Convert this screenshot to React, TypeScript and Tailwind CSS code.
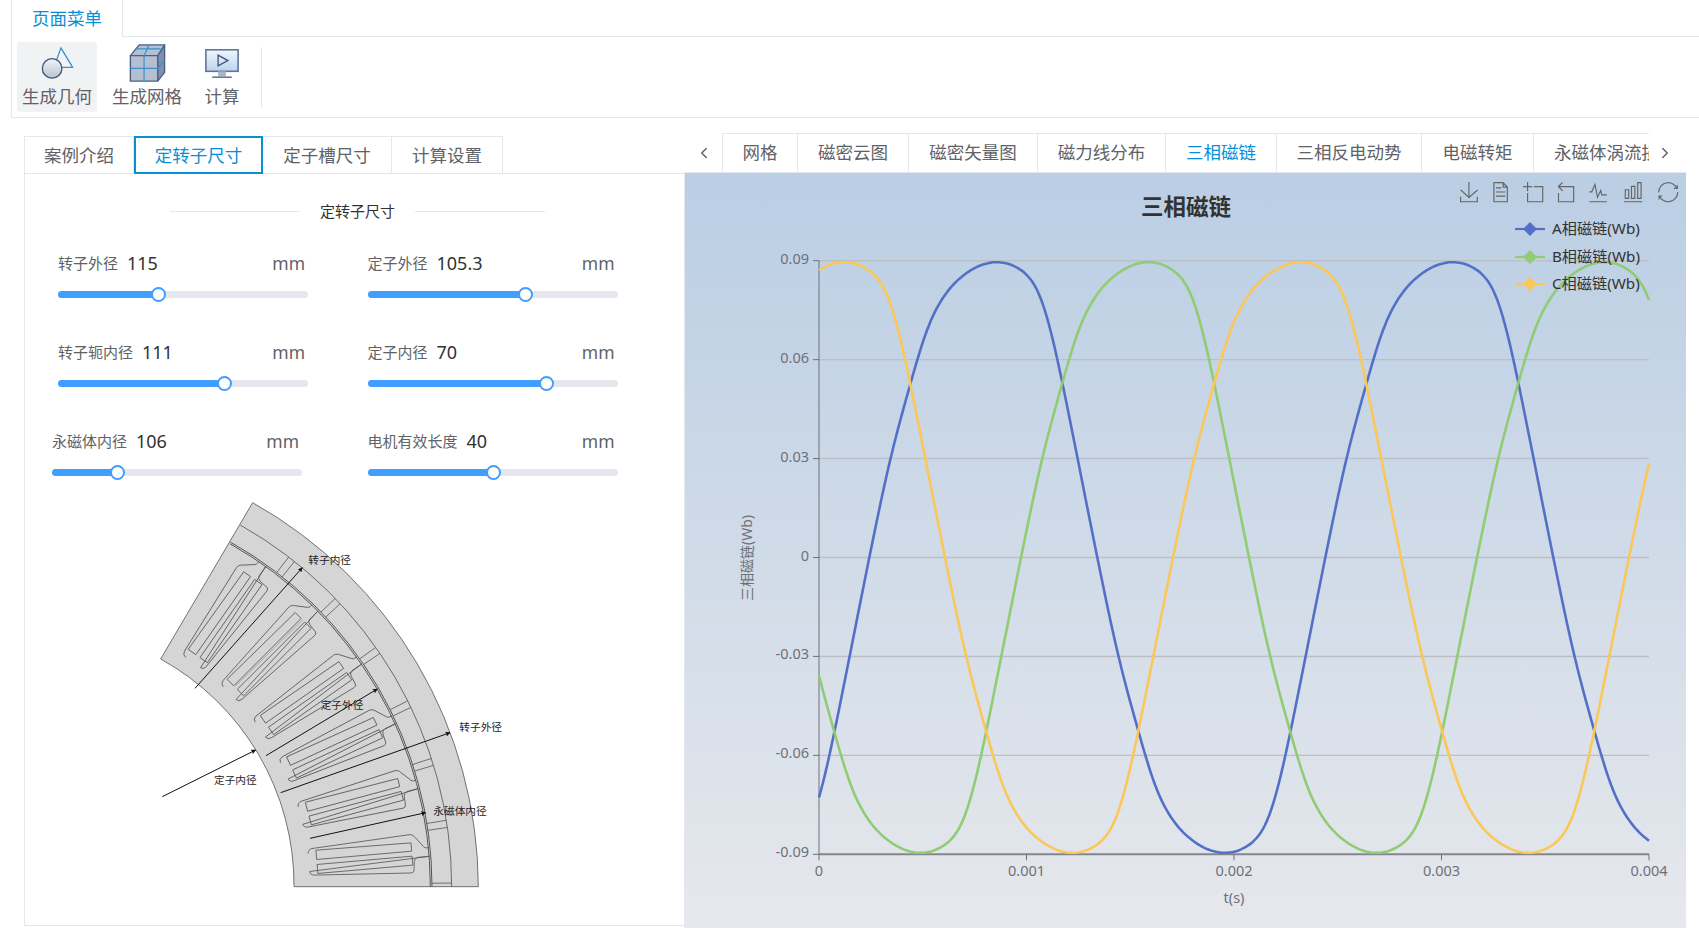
import React from 'react';
import { ChevronLeft, ChevronRight } from 'lucide-react';

const FONT = "'Noto Sans','Noto Sans CJK SC',sans-serif";

// ---------- chart data ----------
const X0 = 819;
const X1 = 1649;
const Y_TOP = 260.7;
const Y_BOTTOM = 854.3;
const PERIOD_PX = 456;

const yOf = (v: number) => (Y_TOP + Y_BOTTOM) / 2 - (v / 0.09) * ((Y_BOTTOM - Y_TOP) / 2);

// half a period of the flux wave, read off the plot: [px after the peak, Wb]
const HALF: [number, number][] = [
  [0, 0.0897],
  [12, 0.089],
  [22, 0.0877],
  [38, 0.0828],
  [48, 0.0752],
  [60.3, 0.06],
  [80.3, 0.03],
  [100, 0],
  [121, -0.03],
  [148, -0.06],
  [159, -0.0705],
  [176, -0.08],
  [192, -0.0851],
  [209, -0.0884],
  [228, -0.0897],
];

const slopeAt = (i: number) => {
  if (i === 0 || i === HALF.length - 1) return 0;
  return (HALF[i + 1][1] - HALF[i - 1][1]) / (HALF[i + 1][0] - HALF[i - 1][0]);
};

const halfWave = (d: number) => {
  let i = 0;
  while (i < HALF.length - 2 && d > HALF[i + 1][0]) i++;
  const [x0, y0] = HALF[i];
  const [x1, y1] = HALF[i + 1];
  const h = x1 - x0;
  const s = (d - x0) / h;
  const s2 = s * s;
  const s3 = s2 * s;
  return (
    (2 * s3 - 3 * s2 + 1) * y0 +
    (s3 - 2 * s2 + s) * h * slopeAt(i) +
    (-2 * s3 + 3 * s2) * y1 +
    (s3 - s2) * h * slopeAt(i + 1)
  );
};

const wave = (x: number, peak: number) => {
  const d = (((x - peak) % PERIOD_PX) + PERIOD_PX) % PERIOD_PX;
  return d < PERIOD_PX / 2 ? halfWave(d) : -halfWave(d - PERIOD_PX / 2);
};

// small moving average, hand-read points leave little kinks otherwise
const smooth = (x: number, peak: number) =>
  [-8, -4, 0, 4, 8].reduce((sum, k) => sum + wave(x + k, peak), 0) / 5;

const curve = (peak: number) => {
  const pts: string[] = [];
  for (let x = X0; x <= X1; x += 2) {
    pts.push(`${x},${yOf(smooth(x, peak)).toFixed(1)}`);
  }
  return pts.join(' ');
};

const series = [
  { name: 'A相磁链(Wb)', color: '#5470c6', peak: 997.3, y: 229 },
  { name: 'B相磁链(Wb)', color: '#91cc75', peak: 1149, y: 257 },
  { name: 'C相磁链(Wb)', color: '#fac858', peak: 845, y: 284 },
];

const yTicks = ['0.09', '0.06', '0.03', '0', '-0.03', '-0.06', '-0.09'];
const xTicks = ['0', '0.001', '0.002', '0.003', '0.004'];

const tools = [
  { x: 1469, d: 'M4.7,22.9L29.3,45.5L54.7,23.4M4.6,43.6L4.6,58L53.8,58L53.8,43.6M29.2,45.1L29.2,0' },
  { x: 1500, d: 'M17.5,17.3H33M45.4,29.5h-28M11.5,2v56H51V14.8L38.4,2H11.5zM38.4,2.2v12.7H51M45.4,41.7h-28' },
  { x: 1533, d: 'M0,13.5h26.9M13.5,26.9V0M32.1,13.5H58V58H13.5V32.1' },
  { x: 1565, d: 'M22,1.4L9.9,13.5l12.3,12.3M10.3,13.5H54.9v44.6H10.3v-26' },
  { x: 1598, d: 'M4.1,28.9h7.1l9.3-22l7.4,38l9.7-19.7l3,12.8h14.9M4.1,58h51.4' },
  { x: 1633, d: 'M6.7,22.9h10V48h-10V22.9zM24.9,13h10v35h-10V13zM43.2,2h10v46h-10V2zM3.1,58h53.7' },
  { x: 1668, d: 'M47,18.9h9.8V8.7M56.3,20.1C52.1,9,40.5,0.6,26.8,2.1C12.6,3.7,1.6,16.2,2.1,30.6M13,41.1H3.1v10.2M3.7,39.9c4.2,11.1,15.8,19.5,29.5,18c14.2-1.6,25.2-14.1,24.7-28.5' },
];

const FluxChart = () => (
  <svg viewBox="685 173 1001 754" className="block w-full h-full" style={{ fontFamily: FONT }}>
    {tools.map((t) => (
      <path
        key={t.x}
        d={t.d}
        transform={`translate(${t.x - 10} 182) scale(0.34)`}
        fill="none"
        stroke="#666"
        strokeWidth={3.4}
      />
    ))}
    <text x={1186} y={215} textAnchor="middle" fontSize={22.5} fontWeight={700} fill="#333">三相磁链</text>

    {yTicks.map((label, i) => {
      const y = Y_TOP + (i * (Y_BOTTOM - Y_TOP)) / 6;
      return (
        <g key={label}>
          <line x1={X0} x2={X1} y1={y} y2={y} stroke={i === 6 ? '#84868c' : '#bcbfc4'} strokeWidth={i === 6 ? 2 : 1.4} />
          <line x1={X0 - 6} x2={X0} y1={y} y2={y} stroke="#6e7079" />
          <text x={809} y={y + 3} textAnchor="end" fontSize={14.5} fill="#6e7079">{label}</text>
        </g>
      );
    })}
    <line x1={X0} x2={X0} y1={Y_TOP} y2={Y_BOTTOM} stroke="#6e7079" />
    {xTicks.map((label, i) => {
      const x = X0 + (i * (X1 - X0)) / 4;
      return (
        <g key={label}>
          <line x1={x} x2={x} y1={Y_BOTTOM} y2={Y_BOTTOM + 6} stroke="#6e7079" />
          <text x={x} y={876} textAnchor="middle" fontSize={14.5} fill="#6e7079">{label}</text>
        </g>
      );
    })}
    <text x={1234} y={903} textAnchor="middle" fontSize={14.5} fill="#6e7079">t(s)</text>
    <text transform="translate(752 558) rotate(-90)" textAnchor="middle" fontSize={14} fill="#6e7079">三相磁链(Wb)</text>

    {series.map((s) => (
      <polyline key={s.name} points={curve(s.peak)} fill="none" stroke={s.color} strokeWidth={2.6} strokeLinejoin="round" />
    ))}

    {series.map((s) => (
      <g key={s.name}>
        <line x1={1515} x2={1545} y1={s.y} y2={s.y} stroke={s.color} strokeWidth={2.2} />
        <path d={`M1530 ${s.y - 7}L1537 ${s.y}L1530 ${s.y + 7}L1523 ${s.y}Z`} fill={s.color} />
        <text x={1552} y={s.y + 5} fontSize={15.2} fill="#333">{s.name}</text>
      </g>
    ))}
  </svg>
);

// ---------- motor drawing, in 3x crop units, center of the arcs at (-310, 1190) ----------
const CX = -310;
const CY = 1190;
const pol = (r: number, deg: number) => {
  const a = (deg * Math.PI) / 180;
  return `${(CX + r * Math.cos(a)).toFixed(1)} ${(CY - r * Math.sin(a)).toFixed(1)}`;
};

const SLOT =
  'M820,-28Q820,-40 833,-42L1129,-58Q1135,-58 1141,-52L1167,-18Q1170,-14 1175,-14L1182,-14M1182,12L1147,12Q1137,13 1135,24L1132,50Q1131,57 1123,57L833,38Q820,37 820,26Z';

const ARROWS = [
  [165, 595, 487, 233],
  [378, 797, 712, 597],
  [422, 908, 930, 728],
  [67, 920, 347, 780],
  [510, 1045, 857, 968],
];

const LABELS = [
  { text: '转子内径', x: 505, y: 222 },
  { text: '转子外径', x: 958, y: 722 },
  { text: '定子外径', x: 542, y: 656 },
  { text: '定子内径', x: 222, y: 883 },
  { text: '永磁体内径', x: 880, y: 976 },
];

const MotorDrawing = () => (
  <svg viewBox="0 0 1140 1230" className="block w-[380px] h-[410px]" style={{ fontFamily: FONT }}>
    <defs>
      <marker id="head" markerWidth="5" markerHeight="5" refX="4.5" refY="2.5" orient="auto">
        <path d="M0 0L5 2.5L0 5L1 2.5Z" fill="#111" />
      </marker>
    </defs>
    <path
      d={`M${pol(1325, 0)}A1325 1325 0 0 0 338 38L62 507A775 775 0 0 1 ${pol(772, 0)}Z`}
      fill="#d5d5d5"
      stroke="#5a5a5a"
      strokeWidth={2.5}
    />
    {[1245, 1186, 1181].map((r) => (
      <path
        key={r}
        d={`M${pol(r, 0)}A${r} ${r} 0 0 0 ${pol(r, 60.6)}`}
        fill="none"
        stroke="#555"
        strokeWidth={r === 1245 ? 2.5 : 3}
      />
    ))}
    {[0.5, 8.2, 9.2, 17, 18, 25.6, 26.6, 34.2, 35.2, 43, 44, 51.6, 52.6].map((deg) => (
      <path key={deg} d={`M${pol(1186, deg)}L${pol(1245, deg)}`} stroke="#5a5a5a" strokeWidth={2.5} />
    ))}
    {[5, 15, 25, 35, 45, 55].map((deg) => (
      <g key={deg} transform={`translate(${CX} ${CY}) rotate(${-deg})`} fill="none" stroke="#5a5a5a" strokeWidth={2.5}>
        <path d={SLOT} />
        <path d="M844,-36L1130,-33L1130,-8L844,-8Z" />
        <path d="M844,7L1130,7L1130,34L844,34Z" />
      </g>
    ))}
    <path d="M285 590L487 390" stroke="#7da7d9" strokeWidth={2.5} />
    {ARROWS.map(([x1, y1, x2, y2], i) => (
      <line key={i} x1={x1} y1={y1} x2={x2} y2={y2} stroke="#111" strokeWidth={3} markerEnd="url(#head)" />
    ))}
    {LABELS.map((l) => (
      <text key={l.text} x={l.x} y={l.y} fontSize={32} fill="#222">{l.text}</text>
    ))}
  </svg>
);

// ---------- toolbar icons ----------
const GeometryIcon = () => (
  <svg viewBox="0 0 44 44" className="w-[44px] h-[44px]">
    <defs>
      <linearGradient id="ball" x1="0" y1="0" x2="0" y2="1">
        <stop offset="0" stopColor="#f2f4f8" />
        <stop offset="1" stopColor="#b9c2d2" />
      </linearGradient>
    </defs>
    <path d="M26 6L38 26H19Z" fill="#f1f4f8" stroke="#3c8dcb" strokeWidth={1.3} />
    <circle cx="17" cy="27" r="10" fill="url(#ball)" stroke="#43567c" strokeWidth={1.4} />
  </svg>
);

const MeshIcon = () => (
  <svg viewBox="0 0 44 44" className="w-[44px] h-[44px]">
    <path d="M5 14L14 3H40V31L33 40H5Z" fill="#b4c0d2" />
    <path d="M33 14L40 3V31L33 40Z" fill="#7e90ad" />
    <path d="M5 14H33V40H5ZM5 14L14 3H40L33 14M33 40L40 31V3" fill="none" stroke="#4a5d82" strokeWidth={1.4} />
    <path d="M19 14V40M5 27H33M24 3L19 14M33 27L40 18M11 7H36" fill="none" stroke="#3c8dcb" strokeWidth={1.2} />
  </svg>
);

const RunIcon = () => (
  <svg viewBox="0 0 44 44" className="w-[44px] h-[44px]">
    <defs>
      <linearGradient id="screen" x1="0" y1="0" x2="0" y2="1">
        <stop offset="0" stopColor="#f0f6fc" />
        <stop offset="1" stopColor="#bcd4ee" />
      </linearGradient>
    </defs>
    <rect x="5.5" y="8" width="33" height="22" fill="url(#screen)" stroke="#5f7396" strokeWidth={1.6} />
    <path d="M18 13.5L28 19L18 24.5Z" fill="none" stroke="#43567c" strokeWidth={1.4} />
    <path d="M18 30H26V35H18Z" fill="#a9b5c6" />
    <path d="M12 36H32" stroke="#5f7396" strokeWidth={1.6} />
  </svg>
);

const menuItems = [
  { label: '生成几何', icon: <GeometryIcon />, active: true, cls: 'ml-[5px] px-[5px]' },
  { label: '生成网格', icon: <MeshIcon />, active: false, cls: 'ml-[10px] px-[5px]' },
  { label: '计算', icon: <RunIcon />, active: false, cls: 'ml-[8px] px-[5px]' },
];

// ---------- sliders ----------
const fields = [
  { label: '转子外径', value: '115', pct: 40, shift: false },
  { label: '定子外径', value: '105.3', pct: 63, shift: false },
  { label: '转子轭内径', value: '111', pct: 66.5, shift: false },
  { label: '定子内径', value: '70', pct: 71.5, shift: false },
  { label: '永磁体内径', value: '106', pct: 26, shift: true },
  { label: '电机有效长度', value: '40', pct: 50, shift: false },
];

const Field = ({ label, value, pct, shift }: { label: string; value: string; pct: number; shift: boolean }) => (
  <div className={shift ? 'w-[250px] -ml-[6px]' : 'w-[250px]'}>
    <div className="flex items-center justify-between h-[24px] pr-[3px]">
      <div className="flex items-center gap-[9px]">
        <span className="text-[15px] text-[#606266]">{label}</span>
        <span className="text-[18px] text-[#303133]">{value}</span>
      </div>
      <span className="text-[17.5px] text-[#606266]">mm</span>
    </div>
    <div className="relative h-[7px] mt-[16px] rounded-full bg-[#e4e7ed]">
      <div className="h-full rounded-full bg-[#409eff]" style={{ width: `${pct}%` }} />
      <div
        className="absolute top-[-4px] w-[15px] h-[15px] -ml-[7px] rounded-full bg-white border-2 border-[#409eff]"
        style={{ left: `${pct}%` }}
      />
    </div>
  </div>
);

const leftTabs = [
  { label: '案例介绍', w: 'w-[110px]', active: false },
  { label: '定转子尺寸', w: 'w-[129px]', active: true },
  { label: '定子槽尺寸', w: 'w-[129px]', active: false },
  { label: '计算设置', w: 'w-[111px]', active: false },
];

const rightTabs = [
  { label: '网格', w: 'w-[75px]' },
  { label: '磁密云图', w: 'w-[111px]' },
  { label: '磁密矢量图', w: 'w-[129px]' },
  { label: '磁力线分布', w: 'w-[128px]' },
  { label: '三相磁链', w: 'w-[111px]', active: true },
  { label: '三相反电动势', w: 'w-[145px]' },
  { label: '电磁转矩', w: 'w-[112px]' },
  { label: '永磁体涡流损耗', w: 'w-[116px]', clip: true },
];

export default function App() {
  return (
    <div className="w-[1699px] h-[948px] overflow-hidden bg-white" style={{ fontFamily: FONT }}>
      {/* page menu */}
      <div className="ml-[11px] border-l border-b border-[#e4e7ed]">
        <div className="flex h-[37px] border-b border-[#e4e7ed]">
          <div className="w-[111px] h-[37px] flex items-center justify-center bg-white border-r border-[#e4e7ed] text-[17.5px] text-[#0a8fd6]">
            页面菜单
          </div>
        </div>
        <div className="flex h-[80px] items-center">
          {menuItems.map((m) => (
            <button
              key={m.label}
              className={`${m.cls} h-[70px] flex flex-col items-center justify-end pb-[5px] rounded-[3px] ${m.active ? 'bg-[#f1f2f4]' : ''}`}
            >
              {m.icon}
              <span className="text-[17.5px] leading-[22px] text-[#606266] whitespace-nowrap">{m.label}</span>
            </button>
          ))}
          <div className="ml-[12px] w-px h-[60px] bg-[#e4e7ed]" />
        </div>
      </div>

      <div className="flex mt-[15px]">
        {/* left column */}
        <div className="ml-[24px] w-[660px] pt-[3px]">
          <div className="flex h-[38px]">
            {leftTabs.map((t, i) => (
              <div
                key={t.label}
                className={`${t.w} flex items-center justify-center text-[17.5px] ${
                  t.active
                    ? 'border-2 border-[#0a8fd6] text-[#0a8fd6]'
                    : `border-t border-b border-r border-[#e4e7ed] text-[#606266] ${i === 0 ? 'border-l' : ''}`
                }`}
              >
                {t.label}
              </div>
            ))}
            <div className="flex-1 border-b border-[#e4e7ed]" />
          </div>
          <div className="h-[752px] border-l border-b border-[#e4e7ed]">
            <div className="flex items-center pt-[25px] pl-[145px]">
              <div className="w-[130px] h-px bg-[#e4e7ed]" />
              <span className="mx-[20px] text-[15px] leading-[24px] text-[#303133]">定转子尺寸</span>
              <div className="w-[130px] h-px bg-[#e4e7ed]" />
            </div>
            <div className="grid grid-cols-[309.5px_250px] gap-y-[42px] pl-[33px] mt-[28px]">
              {fields.map((f) => (
                <Field key={f.label} {...f} />
              ))}
            </div>
            <div className="ml-[115px] mt-[14px]">
              <MotorDrawing />
            </div>
          </div>
        </div>

        {/* right column */}
        <div className="w-[1002px]">
          <div className="flex h-[39px]">
            <div className="w-[38px] pl-[2px] flex items-center justify-center text-[#606266]">
              <ChevronLeft size={18} />
            </div>
            <div className="flex w-[927px] overflow-hidden border-t border-l border-[#e4e7ed]">
              {rightTabs.map((t) => (
                <div
                  key={t.label}
                  className={`${t.w} shrink-0 overflow-hidden whitespace-nowrap flex items-center pb-[1px] text-[17.5px] ${
                    t.clip ? 'pl-[20px]' : 'justify-center border-r border-[#e4e7ed]'
                  } ${t.active ? 'text-[#0a8fd6]' : 'text-[#606266]'}`}
                >
                  {t.label}
                </div>
              ))}
            </div>
            <div className="w-[32px] flex items-center justify-center text-[#606266]">
              <ChevronRight size={18} />
            </div>
          </div>
          <div className="h-[756px] border-t border-l border-b border-[#e4e7ed] bg-gradient-to-b from-[#bacee4] to-[#e6e8ec]">
            <FluxChart />
          </div>
        </div>
      </div>
    </div>
  );
}
